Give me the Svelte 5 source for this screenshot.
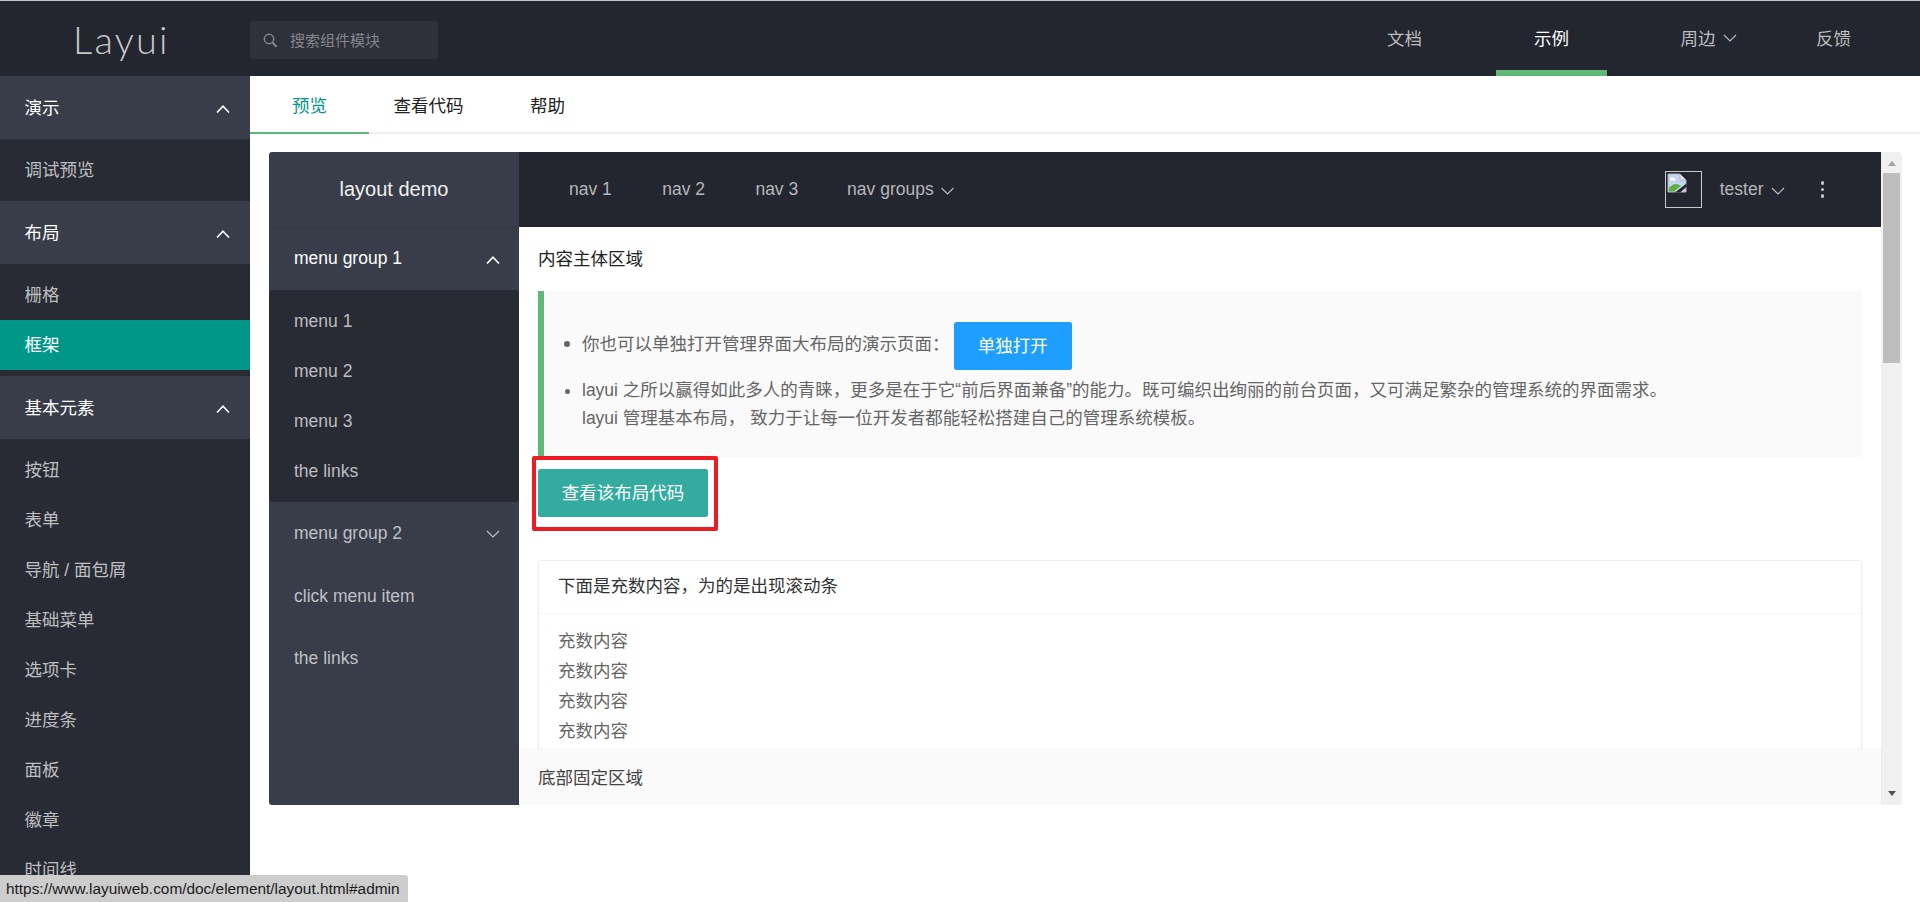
<script>
  const sideGroups = [
    { title: '演示', items: ['调试预览'] },
    { title: '布局', items: ['栅格', '框架'] },
    { title: '基本元素', items: ['按钮', '表单', '导航 / 面包屑', '基础菜单', '选项卡', '进度条', '面板', '徽章', '时间线'] }
  ];
  const fillers = Array(4).fill('充数内容');
</script>

{#snippet chevron(up, cls)}
  <svg class={cls} viewBox="0 0 14 8" fill="none" stroke="currentColor" aria-hidden="true">
    <polyline points={up ? '1,7.5 7,1.2 13,7.5' : '1,1 7,7 13,1'} />
  </svg>
{/snippet}

<div class="page">
  <header class="top">
    <div class="logo">Layui</div>
    <div class="search">
      <svg class="search-icon" viewBox="0 0 15 15" fill="none" stroke="#85868a" aria-hidden="true">
        <circle cx="6" cy="6" r="4.7" stroke-width="1.5" />
        <path d="M9.6 9.8 13.6 13.8" stroke-width="2" />
      </svg>
      <span>搜索组件模块</span>
    </div>
    <nav class="top-nav">
      <a href="#doc">文档</a>
      <a href="#demo" class="on">示例</a>
      <a href="#more" class="more">周边{@render chevron(false, 'caret')}</a>
      <a href="#fb">反馈</a>
    </nav>
  </header>

  <div class="below">
    <aside class="side">
      {#each sideGroups as g}
        <div class="side-head">
          <span>{g.title}</span>
          {@render chevron(true, 'up')}
        </div>
        <div class="side-child">
          {#each g.items as it}
            <div class="side-item" class:sel={it === '框架'}>{it}</div>
          {/each}
        </div>
      {/each}
    </aside>

    <main class="main">
      <div class="tabs">
        <div class="tab active">预览</div>
        <div class="tab">查看代码</div>
        <div class="tab">帮助</div>
      </div>

      <div class="frame">
        <div class="demo-side">
          <div class="demo-logo">layout demo</div>
          <div class="demo-head">menu group 1 {@render chevron(true, 'up')}</div>
          <div class="demo-child">
            <div>menu 1</div>
            <div>menu 2</div>
            <div>menu 3</div>
            <div>the links</div>
          </div>
          <div class="demo-head dim">menu group 2 {@render chevron(false, 'up')}</div>
          <div class="demo-head dim">click menu item</div>
          <div class="demo-head dim">the links</div>
        </div>

        <div class="demo-body">
          <div class="demo-bar">
            <div class="demo-nav">
              <span>nav 1</span>
              <span>nav 2</span>
              <span>nav 3</span>
              <span class="groups">nav groups{@render chevron(false, 'caret')}</span>
            </div>
            <div class="demo-user">
              <div class="avatar">
                <svg viewBox="0 0 20 20" aria-hidden="true">
                  <path d="M1 1H13L19 7V19H1Z" fill="#c3d5f5" stroke="#b4b4b4" />
                  <path d="M13 1V7H19Z" fill="#e8e8e8" stroke="#b4b4b4" />
                  <path d="M3 6C4 4 6.5 4 7.5 5.5C9 5.5 9 7 8 7.5H3Z" fill="#fff" />
                  <path d="M2 18.5V15C6 10 10 10 14 13L7 18.5Z" fill="#5cb23e" />
                  <path d="M8 19.5 19.5 10.5V14L13 19.5Z" fill="#23262e" />
                </svg>
              </div>
              <span class="user">tester</span>
              {@render chevron(false, 'caret')}
              <div class="dots"><i></i><i></i><i></i></div>
            </div>
          </div>

          <div class="content">
            <div class="lead">内容主体区域</div>
            <div class="quote">
              <ul>
                <li class="first">
                  <span class="first-text">你也可以单独打开管理界面大布局的演示页面：</span>
                  <span class="btn blue">单独打开</span>
                </li>
                <li>layui 之所以赢得如此多人的青睐，更多是在于它“前后界面兼备”的能力。既可编织出绚丽的前台页面，又可满足繁杂的管理系统的界面需求。<br />layui 管理基本布局， 致力于让每一位开发者都能轻松搭建自己的管理系统模板。</li>
              </ul>
            </div>
            <div class="code-wrap">
              <span class="btn teal">查看该布局代码</span>
              <div class="mark"></div>
            </div>
            <div class="card">
              <div class="card-head">下面是充数内容，为的是出现滚动条</div>
              <div class="card-body">
                {#each fillers as f}
                  <div>{f}</div>
                {/each}
              </div>
            </div>
          </div>

          <div class="foot">底部固定区域</div>
        </div>

        <div class="scrollbar">
          <div class="arrow-up"></div>
          <div class="thumb"></div>
          <div class="arrow-down"></div>
        </div>
      </div>
    </main>
  </div>

  <div class="status">https://www.layuiweb.com/doc/element/layout.html#admin</div>
</div>

<style>
  :global(body) {
    margin: 0;
    background: #fff;
  }
  .page {
    position: relative;
    height: 902px;
    overflow: hidden;
    display: flex;
    flex-direction: column;
    font-family: "Liberation Sans", "Noto Sans CJK SC", sans-serif;
    font-size: 17.5px;
    color: #333;
  }

  .top {
    height: 75px;
    flex: none;
    border-top: 1px solid #c4c4c4;
    background: #23262e;
    display: flex;
    align-items: center;
  }
  .logo {
    width: 250px;
    flex: none;
    box-sizing: border-box;
    padding-left: 73px;
    font-family: Lato, sans-serif;
    font-weight: 300;
    font-size: 38px;
    letter-spacing: 2.2px;
    color: #c8c9cb;
  }
  .search {
    width: 188px;
    height: 38px;
    align-self: flex-start;
    margin-top: 20px;
    box-sizing: border-box;
    background: #2e3139;
    border-radius: 3px;
    display: flex;
    align-items: center;
    padding: 0 0 2px 13px;
    color: #84868b;
    font-size: 15px;
  }
  .search-icon {
    width: 15px;
    height: 15px;
    margin: 2px 12px 0 0;
  }
  .top-nav {
    margin-left: auto;
    margin-right: 31px;
    display: flex;
    gap: 36px;
    height: 100%;
  }
  .top-nav a {
    box-sizing: border-box;
    width: 111px;
    padding-top: 4px;
    color: #bdbebf;
    text-decoration: none;
    display: flex;
    align-items: center;
    justify-content: center;
    border-bottom: 6px solid transparent;
  }
  .top-nav a.on {
    color: #fff;
    border-bottom-color: #5fb878;
  }
  .top-nav a.more {
    width: 99px;
    justify-content: flex-start;
    padding-left: 37.5px;
  }
  .caret {
    width: 14px;
    height: 8px;
    margin-left: 7px;
    flex: none;
    stroke-width: 1.1;
    color: #bdbebf;
  }
  .up {
    width: 14px;
    height: 8px;
    flex: none;
    stroke-width: 1.6;
    color: #fff;
  }

  .below {
    flex: 1;
    display: flex;
    min-height: 0;
  }
  .side {
    width: 250px;
    flex: none;
    background: #282b33;
    overflow: hidden;
  }
  .side-head {
    height: 63px;
    box-sizing: border-box;
    background: #393d49;
    padding: 0 20px 3px 24.5px;
    display: flex;
    align-items: center;
    justify-content: space-between;
    color: #fff;
  }
  .side-head :global(.up) {
    margin-top: 5px;
  }
  .side-child {
    padding: 6px 0;
    border-radius: 3px;
    background: #282b33;
  }
  .side-item {
    height: 50px;
    line-height: 50px;
    padding-left: 24.5px;
    color: #bebfc1;
  }
  .side-item.sel {
    background: #009688;
    color: #fff;
  }

  .main {
    flex: 1;
    min-width: 0;
    display: flex;
    flex-direction: column;
  }
  .tabs {
    height: 58px;
    flex: none;
    box-sizing: border-box;
    border-bottom: 2px solid #eee;
    display: flex;
  }
  .tab {
    width: 119px;
    height: 58px;
    box-sizing: border-box;
    text-align: center;
    line-height: 60px;
    color: #222;
  }
  .tab.active {
    color: #009688;
    border-bottom: 2px solid #5fb878;
  }

  .frame {
    margin: 18px 18px 0 19px;
    height: 653px;
    display: flex;
    border-radius: 3px;
    overflow: hidden;
  }
  .demo-side {
    width: 250px;
    flex: none;
    background: #393d49;
  }
  .demo-logo {
    height: 75px;
    line-height: 75px;
    text-align: center;
    color: #f0f0f0;
    font-size: 20px;
    box-shadow: 0 1px 1px rgba(0, 0, 0, 0.08);
  }
  .demo-head {
    height: 62.5px;
    box-sizing: border-box;
    padding: 0 25px;
    display: flex;
    align-items: center;
    justify-content: space-between;
    color: #fff;
  }
  .demo-head :global(.up) {
    margin-top: 4px;
    margin-right: -6px;
  }
  .demo-head.dim {
    padding-top: 2px;
    color: #bfc0c5;
  }
  .demo-head.dim :global(.up) {
    margin-top: 0;
    color: #bfc0c5;
    stroke-width: 1.2;
  }
  .demo-child {
    padding: 6px 0;
    border-radius: 3px;
    background: #282b33;
    color: #bcbdbf;
  }
  .demo-child div {
    height: 50px;
    line-height: 50px;
    padding-left: 25px;
  }

  .demo-body {
    flex: 1;
    min-width: 0;
    display: flex;
    flex-direction: column;
  }
  .demo-bar {
    height: 75px;
    flex: none;
    background: #23262e;
    display: flex;
    align-items: center;
    justify-content: space-between;
    color: #b6b7ba;
  }
  .demo-nav {
    display: flex;
    gap: 50.4px;
    padding-left: 50px;
  }
  .groups {
    display: flex;
    align-items: center;
    margin-left: -1.5px;
  }
  .groups :global(.caret) {
    margin-top: 2px;
    margin-left: 6px;
    width: 15px;
  }
  .demo-user {
    display: flex;
    align-items: center;
    padding-right: 57px;
  }
  .avatar {
    width: 37px;
    height: 37px;
    box-sizing: border-box;
    border: 1px solid #c8c8c8;
    margin-right: 18px;
    padding: 1px;
  }
  .avatar svg {
    display: block;
    width: 20px;
    height: 20px;
  }
  .user {
    color: #b6b7ba;
  }
  .demo-user :global(.caret) {
    margin-top: 2px;
  }
  .dots {
    margin-left: 36px;
    display: flex;
    flex-direction: column;
    gap: 3px;
  }
  .dots i {
    width: 3.5px;
    height: 3.5px;
    border-radius: 50%;
    background: #c2c3c5;
  }

  .content {
    flex: 1;
    min-height: 0;
    overflow: hidden;
    padding: 18px 19px 0;
  }
  .lead {
    line-height: 28px;
    margin-bottom: 18px;
    color: #222;
  }
  .quote {
    box-sizing: border-box;
    height: 166px;
    border-left: 6px solid #5fb878;
    border-radius: 0 3px 3px 0;
    background: #fafafa;
    padding: 31px 0 0 38px;
    color: #666;
  }
  ul {
    margin: 0;
    padding: 0;
  }
  li {
    line-height: 28px;
    margin-top: 6px;
  }
  li.first {
    margin-top: 0;
    height: 48px;
    display: flex;
    align-items: center;
    position: relative;
  }
  .first-text {
    padding-bottom: 5px;
  }
  li.first::before {
    content: "";
    position: absolute;
    left: -18px;
    top: 19px;
    width: 6px;
    height: 6px;
    border-radius: 50%;
    background: #666;
  }
  .btn {
    display: inline-block;
    box-sizing: border-box;
    height: 48px;
    line-height: 48px;
    padding: 0 23.75px;
    border-radius: 2.5px;
    color: #fff;
  }
  .blue {
    margin-left: 4.5px;
    background: #1e9fff;
  }
  .teal {
    background: #33ab9f;
  }
  .code-wrap {
    position: relative;
    width: max-content;
    margin-top: 12px;
    display: flex;
  }
  .mark {
    position: absolute;
    left: -6px;
    top: -13px;
    right: -10px;
    bottom: -14px;
    border: 4px solid #ed1c24;
    border-radius: 2px;
  }
  .card {
    margin-top: 43px;
    border: 1px solid #eee;
    border-radius: 3px;
    box-shadow: 0 1px 2px rgba(0, 0, 0, 0.05);
  }
  .card-head {
    height: 52px;
    line-height: 50px;
    padding-left: 19px;
    border-bottom: 1px solid #f6f6f6;
  }
  .card-body {
    padding: 12px 19px 40px;
    line-height: 30px;
    color: #666;
  }
  .foot {
    height: 55px;
    flex: none;
    box-sizing: border-box;
    padding-left: 19px;
    line-height: 56px;
    background: #fafafa;
    color: #444;
    box-shadow: 0 -1px 2px rgba(0, 0, 0, 0.05);
    position: relative;
  }

  .scrollbar {
    width: 21px;
    flex: none;
    background: #f0f0f0;
    border-radius: 0 3px 3px 0;
    display: flex;
    flex-direction: column;
    align-items: center;
  }
  .arrow-up {
    margin: 9px 0 7px;
    width: 0;
    height: 0;
    border: 4.5px solid transparent;
    border-top: 0;
    border-bottom: 5px solid #a3a3a3;
  }
  .thumb {
    width: 17px;
    height: 190px;
    background: #bdbdbd;
  }
  .arrow-down {
    margin-top: auto;
    margin-bottom: 9px;
    width: 0;
    height: 0;
    border: 4.5px solid transparent;
    border-bottom: 0;
    border-top: 5px solid #505050;
  }

  .status {
    position: absolute;
    left: 0;
    bottom: 0;
    width: 408px;
    height: 27px;
    box-sizing: border-box;
    padding-left: 6px;
    line-height: 27px;
    background: #cdcdcd;
    border-radius: 0 3px 0 0;
    font-size: 15.4px;
    color: #1c1c1c;
    white-space: nowrap;
  }
</style>
